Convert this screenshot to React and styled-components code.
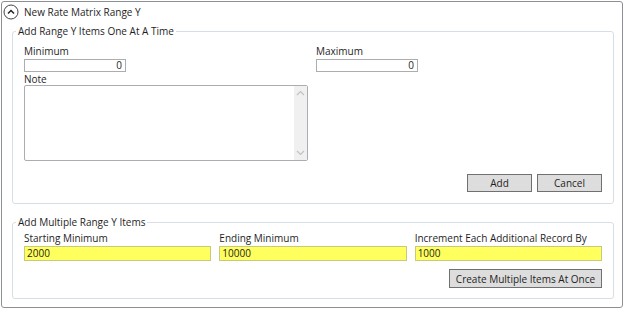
import React from 'react';
import styled, { createGlobalStyle } from 'styled-components';

const GlobalStyle = createGlobalStyle`
  body {
    margin: 0;
    background: #ffffff;
    font-family: "Segoe UI", "Open Sans", Lato, sans-serif;
    font-size: 10px;
    color: #1e1e1e;
  }
`;

const Frame = styled.div`
  box-sizing: border-box;
  width: 622px;
  height: 307px;
  margin: 1px 0 0 1px;
  border: 1px solid #8c8f94;
  border-radius: 3px;
  display: flex;
  flex-direction: column;
  white-space: nowrap;
`;

const Header = styled.div`
  box-sizing: border-box;
  display: flex;
  align-items: center;
  gap: 5px;
  height: 19px;
  padding: 1px 0 0 1px;
  line-height: 16px;
`;

const ExpandIcon = () => (
  <svg width="16" height="16" viewBox="0 0 16 16">
    <circle cx="8" cy="8" r="7" fill="#fff" stroke="#444" strokeWidth="1" />
    <path d="M5 9.5 L8 6.5 L11 9.5" fill="none" stroke="#222" strokeWidth="1.5" />
  </svg>
);

const Group = styled.fieldset`
  margin: ${(p) => p.$top}px 8px 0 10px;
  padding: ${(p) => p.$padTop}px 11px ${(p) => p.$bottom}px 11px;
  border: 1px solid #d5dfe5;
  border-radius: 3px;
  min-width: 0;
`;

const Legend = styled.legend`
  padding: 0 2px;
  margin-left: -8px;
  line-height: 12px;
`;

const FieldRow = styled.div`
  display: grid;
  grid-template-columns: ${(p) => p.$cols};
  column-gap: ${(p) => p.$gap || 0}px;
`;

const Field = styled.div`
  display: flex;
  flex-direction: column;
`;

const Label = styled.span`
  display: block;
  line-height: 12px;
  height: 12px;
  margin-top: ${(p) => p.$top || 0}px;
`;

const TextBox = styled.div`
  box-sizing: border-box;
  height: ${(p) => (p.$yellow ? 15 : 13)}px;
  width: ${(p) => (p.$width ? `${p.$width}px` : 'auto')};
  margin-top: 2px;
  border: 1px solid ${(p) => (p.$yellow ? '#c9c97c' : '#abadb3')};
  background: ${(p) => (p.$yellow ? '#ffff5e' : '#ffffff')};
  text-align: ${(p) => (p.$yellow ? 'left' : 'right')};
  padding: 0 3px 0 2px;
  line-height: ${(p) => (p.$yellow ? 13 : 11)}px;
`;

const NoteBox = styled.div`
  box-sizing: border-box;
  width: 284px;
  height: 76px;
  border: 1px solid #abadb3;
  border-radius: 2px;
  display: flex;
  justify-content: flex-end;
`;

const ScrollBar = styled.div`
  box-sizing: border-box;
  width: 13px;
  background: #f0f0f0;
  display: flex;
  flex-direction: column;
  justify-content: space-between;
  align-items: center;
  padding: 4px 0;
`;

const Arrow = ({ down }) => (
  <svg width="9" height="6" viewBox="0 0 9 6">
    <path
      d={down ? 'M1 1 L4.5 4.5 L8 1' : 'M1 5 L4.5 1.5 L8 5'}
      fill="none"
      stroke="#c2c2c2"
      strokeWidth="1.2"
    />
  </svg>
);

const Buttons = styled.div`
  display: flex;
  justify-content: flex-end;
  gap: 5px;
  margin-top: ${(p) => p.$top}px;
`;

const Button = styled.button`
  box-sizing: border-box;
  width: ${(p) => p.$width}px;
  height: ${(p) => p.$height || 18}px;
  padding: 0;
  border: 1px solid #707070;
  background: #dddddd;
  font-family: inherit;
  font-size: 10px;
  line-height: 14px;
  color: #1e1e1e;
  white-space: nowrap;
`;

export default function App() {
  return (
    <>
      <GlobalStyle />
      <Frame>
        <Header>
          <ExpandIcon />
          <span>New Rate Matrix Range Y</span>
        </Header>

        <Group $top={4} $padTop={8} $bottom={11}>
          <Legend>Add Range Y Items One At A Time</Legend>
          <FieldRow $cols="292px 1fr">
            <Field>
              <Label>Minimum</Label>
              <TextBox $width={102}>0</TextBox>
            </Field>
            <Field>
              <Label>Maximum</Label>
              <TextBox $width={102}>0</TextBox>
            </Field>
          </FieldRow>
          <Label $top={1}>Note</Label>
          <NoteBox>
            <ScrollBar>
              <Arrow />
              <Arrow down />
            </ScrollBar>
          </NoteBox>
          <Buttons $top={13}>
            <Button $width={65}>Add</Button>
            <Button $width={65}>Cancel</Button>
          </Buttons>
        </Group>

        <Group $top={12} $padTop={4} $bottom={10}>
          <Legend>Add Multiple Range Y Items</Legend>
          <FieldRow $cols="1fr 1fr 1fr" $gap={8}>
            <Field>
              <Label>Starting Minimum</Label>
              <TextBox $yellow>2000</TextBox>
            </Field>
            <Field>
              <Label>Ending Minimum</Label>
              <TextBox $yellow>10000</TextBox>
            </Field>
            <Field>
              <Label>Increment Each Additional Record By</Label>
              <TextBox $yellow>1000</TextBox>
            </Field>
          </FieldRow>
          <Buttons $top={8}>
            <Button $width={153} $height={19}>Create Multiple Items At Once</Button>
          </Buttons>
        </Group>
      </Frame>
    </>
  );
}
